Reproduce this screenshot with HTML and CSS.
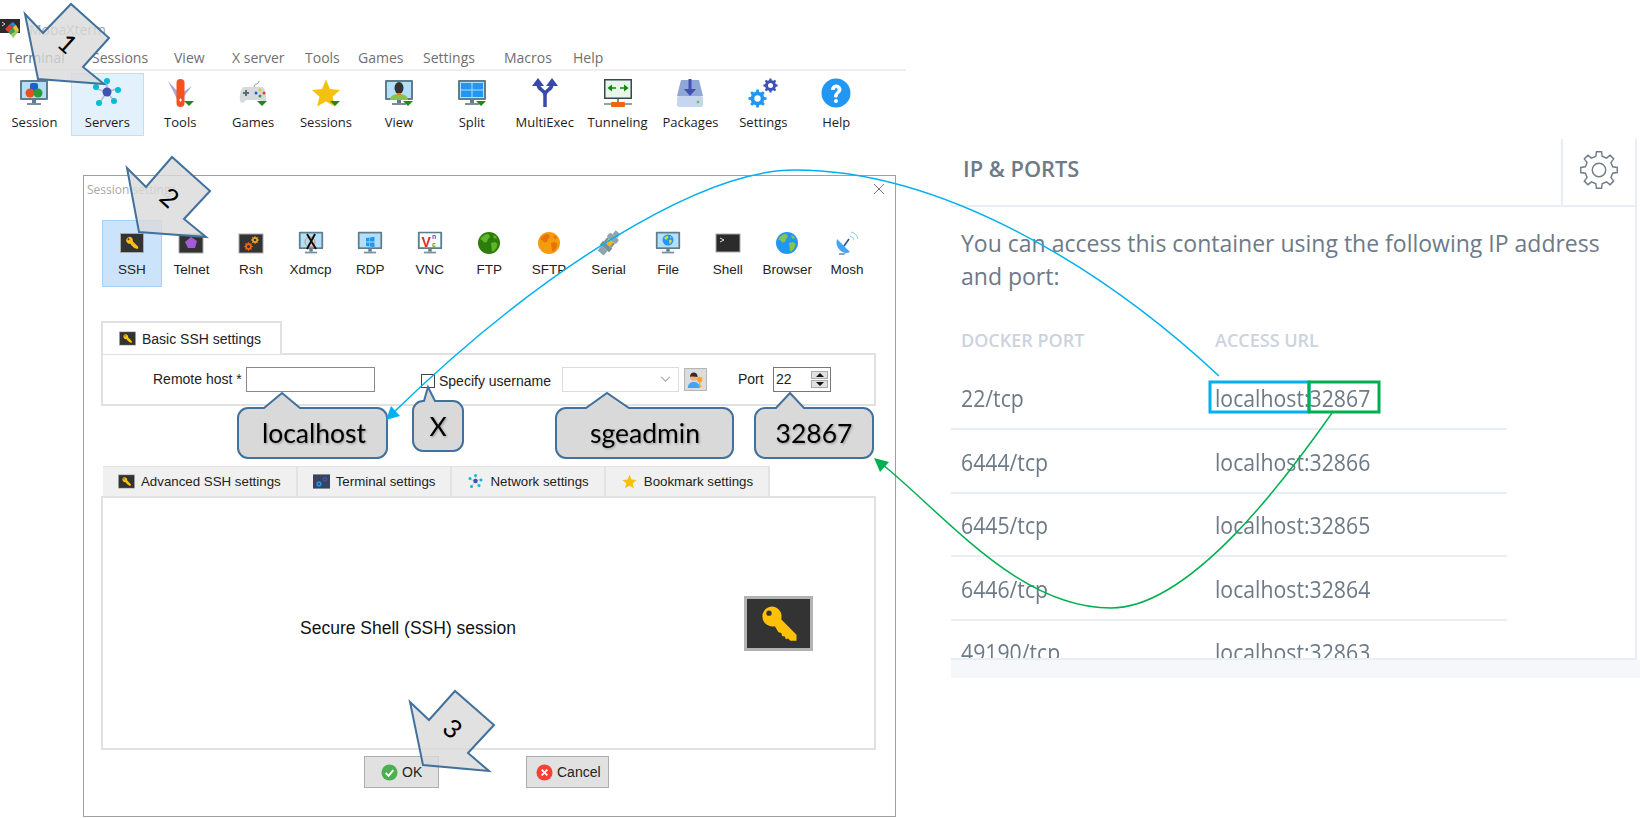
FILE: index.html
```html
<!DOCTYPE html>
<html lang="en">
<head>
<meta charset="utf-8">
<title>MobaXterm session setup</title>
<link rel="stylesheet" href="styles.css">
</head>
<body>
<svg class="defs" width="0" height="0" aria-hidden="true">
  <defs>
    <symbol id="gear" viewBox="-12 -12 24 24"><path fill-rule="evenodd" d="M11.39-1.6 11.39 1.6 8.57 1.98 7.46 4.66 9.18 6.92 6.92 9.18 4.66 7.46 1.98 8.57 1.6 11.39-1.6 11.39-1.98 8.57-4.66 7.46-6.92 9.18-9.18 6.92-7.46 4.66-8.57 1.98-11.39 1.6-11.39-1.6-8.57-1.98-7.46-4.66-9.18-6.92-6.92-9.18-4.66-7.46-1.98-8.57-1.6-11.39 1.6-11.39 1.98-8.57 4.66-7.46 6.92-9.18 9.18-6.92 7.46-4.66 8.57-1.98ZM4 0A4 4 0 1 0-4 0 4 4 0 1 0 4 0Z"/></symbol>
    <symbol id="key" viewBox="0 0 24 24"><path fill="#ffc107" d="M7.500 1.500a6 6 0 0 1 5.800 7.700l9.200 9.200V22h-3.700l-1.300-1.300-1.400.5-.6-1.700-1.600-.3-.5-1.800-1.700-.4-2.200-3.700A6 6 0 1 1 7.500 1.500z"/><circle cx="6" cy="5.500" r="1.600" fill="#333"/></symbol>
    <symbol id="keytile" viewBox="0 0 24 20"><rect x=".5" y=".5" width="23" height="19" fill="#333" stroke="#aaa"/><use href="#key" x="5" y="3" width="14" height="14"/></symbol>
    <symbol id="mon" viewBox="0 0 30 30"><rect x="1" y="2" width="28" height="20" rx="1" fill="#607d8b"/><rect x="3" y="4" width="24" height="16" fill="#b3dff9"/><rect x="13" y="22" width="4" height="3" fill="#607d8b"/><rect x="8" y="25" width="14" height="2" fill="#78909c"/></symbol>
    <symbol id="land" viewBox="0 0 24 24"><path fill="currentColor" d="M6 5l3-2 3 .5 1 2.500-2 2-1 3-3 .5-1.500-2-2-1 .5-2zM14 12l4-1 2.500 2-1 4-3 3.500-1.500-.5-.5-4zM16 4l3 1.500 1 2h-3z"/></symbol>
    <symbol id="net" viewBox="0 0 30 30"><g stroke="#b0bec5" stroke-width="1.500"><path d="M15 14 15 4M15 14 5 11M15 14 24 11M15 14 8 24M15 14 22 23"/></g><circle cx="15" cy="14" r="4.500" fill="#3f51b5"/><g fill="#00bcd4"><circle cx="15" cy="3" r="3"/><circle cx="4" cy="9" r="3"/><circle cx="26" cy="12" r="3"/><circle cx="7" cy="25" r="3"/><circle cx="22" cy="23" r="3"/></g></symbol>
    <symbol id="star" viewBox="0 0 30 30"><path fill="#f4c20d" d="M15 1.500 19 11 29 12 21.500 18.800 24 28.500 15 23.500 6 28.500 8.500 18.800 1 12 11 11z"/></symbol>
    <symbol id="tri" viewBox="0 0 30 30"><path fill="#1b8a1b" d="M19 23h10l-5 5z"/></symbol>
  </defs>
</svg>

<div class="canvas">
  <div class="left">
    <header class="titlebar">
      <svg class="app-ico" viewBox="0 0 20 20"><rect y="0" width="20" height="14" fill="#2b2b2b"/><path d="M2 3l3 2-3 2" fill="none" stroke="#ccc"/><path d="M5 10l5-5 3 3-5 5z" fill="#e53935"/><path d="M10 5l3-2 3 3-3 2z" fill="#1e88e5"/><path d="M8 13l5-5 3 3-5 5z" fill="#43a047"/><path d="M13 8l3-2 3 5-3 3z" fill="#fbc02d"/><path d="M11 16l5-5 3 1-6 7z" fill="#9ccc65"/></svg>
      <span class="app-name">MobaXterm</span>
    </header>
    <nav class="menu">
      <span>Terminal</span><span>Sessions</span><span>View</span><span>X server</span><span>Tools</span><span>Games</span><span>Settings</span><span>Macros</span><span>Help</span>
    </nav>
    <div class="toolbar">
      <div class="tool">
        <svg class="tool-ico" viewBox="0 0 30 30"><use href="#mon" width="30" height="30"/><rect x="11" y="5" width="8" height="8" rx="2" fill="#1e5fd0"/><circle cx="11" cy="15" r="4.500" fill="#e8501e"/><circle cx="19" cy="15" r="4.500" fill="#2e9b3a"/></svg>
        <span>Session</span>
      </div>
      <div class="tool tool-on">
        <svg class="tool-ico" viewBox="0 0 30 30"><use href="#net" width="30" height="30"/></svg>
        <span>Servers</span>
      </div>
      <div class="tool">
        <svg class="tool-ico" viewBox="0 0 30 30"><path d="M3 3 16 17 12 21ZM27 8 17 21 14 17Z" fill="#a9a8d8"/><rect x="11.500" y="1" width="8" height="28" rx="4" fill="#f4511e"/><path d="M14 22h3M15.500 20.500v3" stroke="#fff"/><use href="#tri" width="30" height="30" y="0"/></svg>
        <span>Tools</span>
      </div>
      <div class="tool">
        <svg class="tool-ico" viewBox="0 0 30 30"><path d="M16 9c0-4 5-2 5-6" fill="none" stroke="#78909c"/><path d="M6 9h18c3 0 5 9 4 14-1 3-4 2-6-1H8c-2 3-5 4-6 1C1 18 3 9 6 9z" fill="#d6dadd"/><path d="M5 15h6M8 12v6" stroke="#546e7a" stroke-width="2"/><circle cx="18" cy="15" r="1.500" fill="#1e5fd0"/><circle cx="22" cy="12" r="1.500" fill="#f4c20d"/><circle cx="26" cy="15" r="1.500" fill="#e53935"/><circle cx="22" cy="18" r="1.500" fill="#2e9b3a"/><use href="#tri" width="30" height="30"/></svg>
        <span>Games</span>
      </div>
      <div class="tool">
        <svg class="tool-ico" viewBox="0 0 30 30"><use href="#star" width="30" height="30"/><use href="#tri" width="30" height="30"/></svg>
        <span>Sessions</span>
      </div>
      <div class="tool">
        <svg class="tool-ico" viewBox="0 0 30 30"><use href="#mon" width="30" height="30"/><path d="M6 22c0-4 4-6 9-6s9 2 9 6z" fill="#8bc34a"/><ellipse cx="15" cy="10" rx="4.500" ry="6" fill="#333"/><rect x="13" y="15" width="4" height="2" fill="#f57c00"/><use href="#tri" width="30" height="30"/></svg>
        <span>View</span>
      </div>
      <div class="tool">
        <svg class="tool-ico" viewBox="0 0 30 30"><use href="#mon" width="30" height="30"/><path d="M4 5h10.500v6.500H4zM15.500 5H26v6.500H15.500zM4 12.500h10.500V19H4zM15.500 12.500H26V19H15.500z" fill="#2196f3"/><use href="#tri" width="30" height="30"/></svg>
        <span>Split</span>
      </div>
      <div class="tool">
        <svg class="tool-ico" viewBox="0 0 30 30"><path d="M15 29V17C15 11 8 13 8 6M15 17C15 11 22 13 22 6" fill="none" stroke="#3949ab" stroke-width="3.500"/><path d="M8 0 14 8H2zM22 0 28 8H16z" fill="#3949ab"/></svg>
        <span>MultiExec</span>
      </div>
      <div class="tool">
        <svg class="tool-ico" viewBox="0 0 30 30"><rect x="1" y="1" width="28" height="20" fill="#37474f"/><rect x="2.500" y="2.500" width="25" height="17" fill="#e8f5e9"/><path d="M8 10H13M22 10H17" stroke="#0a8a0a" stroke-width="1.500"/><path d="M9 6.500v7L4.500 10zM21 6.500v7l4.500-3.500z" fill="#0a8a0a"/><rect x="14" y="21" width="2" height="4" fill="#78909c"/><rect x="1" y="25" width="28" height="2" fill="#90a4ae"/><rect x="8" y="24" width="14" height="5" rx="1" fill="#f4630f"/></svg>
        <span>Tunneling</span>
      </div>
      <div class="tool">
        <svg class="tool-ico" viewBox="0 0 30 30"><path d="M6 2h18l4 16H2z" fill="#8fa8d6"/><rect x="2" y="18" width="26" height="11" rx="2" fill="#c5d6ee"/><circle cx="23" cy="24" r="1.300" fill="#55cc22"/><path d="M15 1v13" stroke="#3f51b5" stroke-width="3"/><path d="M9 11h12l-6 7z" fill="#3f51b5"/></svg>
        <span>Packages</span>
      </div>
      <div class="tool">
        <svg class="tool-ico" viewBox="0 0 30 30"><use class="gear-dk" href="#gear" x="15" y="0" width="15" height="15"/><use class="gear-lt" href="#gear" x="0" y="11" width="19" height="19"/></svg>
        <span>Settings</span>
      </div>
      <div class="tool">
        <svg class="tool-ico" viewBox="0 0 30 30"><circle cx="15" cy="15" r="14.500" fill="#2196f3"/><path d="M10.500 11.500c0-6 9.500-6 9.500 0 0 4-4 3.500-4 7.500h-2.500c0-5 3.500-4.500 3.500-7.500 0-2.500-3.500-2.500-3.500 0z" fill="#fff" stroke="#fff"/><circle cx="15" cy="23" r="2" fill="#fff"/></svg>
        <span>Help</span>
      </div>
    </div>

    <section class="dialog">
      <div class="dlg-title">
        <span>Session settings</span>
        <svg class="dlg-close" viewBox="0 0 12 12"><path d="M1 1 11 11M11 1 1 11" stroke="#777" fill="none"/></svg>
      </div>
      <div class="types">
        <div class="type type-on"><svg class="type-ico" viewBox="0 0 24 24"><use href="#keytile" y="2" width="24" height="20"/></svg><span>SSH</span></div>
        <div class="type"><svg class="type-ico" viewBox="0 0 24 24"><rect y="3" width="24" height="19" fill="#333" stroke="#aaa"/><path d="M12 6l6 4-2 7H9l-3-6z" fill="#a35bd6"/></svg><span>Telnet</span></div>
        <div class="type"><svg class="type-ico" viewBox="0 0 24 24"><rect y="3" width="24" height="19" fill="#333" stroke="#aaa"/><use class="gear-or" href="#gear" x="5" y="11" width="9" height="9"/><use class="gear-yl" href="#gear" x="12" y="5" width="8" height="8"/></svg><span>Rsh</span></div>
        <div class="type"><svg class="type-ico" viewBox="0 0 24 24"><use href="#mon" x="-1" y="-1" width="26" height="26"/><circle cx="11" cy="11" r="5" fill="none" stroke="#e08a5a"/><path d="M8 3 17 18M16 3 8 18" stroke="#111" stroke-width="2"/></svg><span>Xdmcp</span></div>
        <div class="type"><svg class="type-ico" viewBox="0 0 24 24"><use href="#mon" x="-1" y="-1" width="26" height="26"/><path d="M8 7l3.500-.5v4H8zM12 6.500l4.500-.7v4.700H12zM8 11.500h3.500v4L8 15zM12 11.500h4.500v4.700L12 15.500z" fill="#2196f3"/></svg><span>RDP</span></div>
        <div class="type"><svg class="type-ico" viewBox="0 0 24 24"><use href="#mon" x="-1" y="-1" width="26" height="26"/><rect x="2" y="2.500" width="20" height="13.500" fill="#fff"/><text class="vnc"><tspan class="vnc-v" x="3.500" y="15.500">V</tspan><tspan class="vnc-n" x="14" y="8">n</tspan><tspan class="vnc-c" x="14" y="15.800">c</tspan></text></svg><span>VNC</span></div>
        <div class="type"><svg class="type-ico" viewBox="0 0 24 24"><circle cx="12" cy="12" r="11" fill="#2e7d0a"/><use href="#land" width="24" height="24" color="#5cb82a"/></svg><span>FTP</span></div>
        <div class="type"><svg class="type-ico" viewBox="0 0 24 24"><circle cx="12" cy="12" r="11" fill="#f59c0c"/><use href="#land" width="24" height="24" color="#e8730c"/></svg><span>SFTP</span></div>
        <div class="type"><svg class="type-ico" viewBox="0 0 24 24"><g transform="rotate(40 12 12)"><rect x="9" y="-2" width="6" height="5" fill="#90a4ae"/><rect x="6" y="3" width="12" height="6" rx="2" fill="#90a4ae"/><rect x="8" y="9" width="8" height="5" fill="#f5b50a"/><path d="M8 9v5M16 9v5" stroke="#78909c" stroke-width="2"/><rect x="6" y="14" width="12" height="5" fill="#78909c"/><rect x="8" y="19" width="8" height="6" fill="#90a4ae"/></g></svg><span>Serial</span></div>
        <div class="type"><svg class="type-ico" viewBox="0 0 24 24"><use href="#mon" x="-1" y="-1" width="26" height="26"/><circle cx="12" cy="9" r="5.500" fill="#2196f3"/><use href="#land" x="6.500" y="3.500" width="11" height="11" color="#cddc39"/></svg><span>File</span></div>
        <div class="type"><svg class="type-ico" viewBox="0 0 24 24"><rect y="3" width="24" height="18" fill="#2b2b2b" stroke="#aaa"/><path d="M4 7l4 2-4 2" fill="none" stroke="#ddd"/></svg><span>Shell</span></div>
        <div class="type"><svg class="type-ico" viewBox="0 0 24 24"><circle cx="12" cy="12" r="11" fill="#2196f3"/><use href="#land" width="24" height="24" color="#8bc34a"/></svg><span>Browser</span></div>
        <div class="type"><svg class="type-ico" viewBox="0 0 24 24"><path d="M2 8 15 21C9 25-1 17 2 8z" fill="#42a5f5"/><path d="M9 15 14 8" stroke="#1a4f8a" stroke-width="1.500"/><path d="M15 5a5 5 0 0 1 4 4M16 1a9 9 0 0 1 7 7" fill="none" stroke="#90caf9"/><path d="M4 22h7l-2 2H4z" fill="#90a4ae"/></svg><span>Mosh</span></div>
      </div>

      <div class="basic-tabs">
        <div class="tab-on"><svg class="tab-ico" viewBox="0 0 24 20"><use href="#keytile" width="24" height="20"/></svg><span>Basic SSH settings</span></div>
      </div>
      <div class="basic-panel">
        <label class="host-label">Remote host *</label>
        <span class="field host-field"></span>
        <span class="check"></span>
        <label class="user-label">Specify username</label>
        <span class="combo"><svg class="chev" viewBox="0 0 12 8"><path d="M1 1l5 5 5-5" fill="none" stroke="#aaa" stroke-width="1.300"/></svg></span>
        <span class="user-btn"><svg viewBox="0 0 20 20"><path d="M1 20c0-5 3-7 7-7s7 2 7 7z" fill="#42a5f5"/><circle cx="8" cy="7" r="4.500" fill="#f0b27a"/><path d="M3.500 7c0-7 9-7 9 0-3 0-6-1-9 0z" fill="#3b2a20"/><circle cx="15" cy="10" r="3.200" fill="#f5a623"/><path d="M15 12v6h2" fill="none" stroke="#f5a623" stroke-width="1.600"/></svg></span>
        <label class="port-label">Port</label>
        <span class="spin"><span class="spin-val">22</span><span class="spin-btns"><i class="spin-up"></i><i class="spin-dn"></i></span></span>
      </div>

      <div class="sub-tabs">
        <div class="sub-tab"><svg class="tab-ico" viewBox="0 0 24 20"><use href="#keytile" width="24" height="20"/></svg><span>Advanced SSH settings</span></div>
        <div class="sub-tab"><svg class="tab-ico" viewBox="0 0 24 20"><rect width="24" height="20" fill="#37445c"/><use class="gear-lt" href="#gear" x="4" y="9" width="9" height="9"/><use class="gear-dk" href="#gear" x="13" y="3" width="8" height="8"/></svg><span>Terminal settings</span></div>
        <div class="sub-tab"><svg class="tab-ico" viewBox="0 0 30 30"><use href="#net" width="30" height="30"/></svg><span>Network settings</span></div>
        <div class="sub-tab"><svg class="tab-ico" viewBox="0 0 30 30"><use href="#star" width="30" height="30"/></svg><span>Bookmark settings</span></div>
      </div>
      <div class="sub-panel">
        <p class="session-desc">Secure Shell (SSH) session</p>
        <div class="big-key"><svg viewBox="0 0 24 24"><use href="#key" width="24" height="24"/></svg></div>
      </div>
      <div class="actions">
        <button class="btn btn-ok" type="button"><svg viewBox="0 0 18 18"><circle cx="9" cy="9" r="8.500" fill="#4caf50"/><path d="M5 9.500l3 3 5-6" fill="none" stroke="#fff" stroke-width="2"/></svg>OK</button>
        <button class="btn btn-cancel" type="button"><svg viewBox="0 0 18 18"><circle cx="9" cy="9" r="8.500" fill="#f44336"/><path d="M6 6l6 6M12 6l-6 6" fill="none" stroke="#fff" stroke-width="2"/></svg>Cancel</button>
      </div>
    </section>
  </div>

  <main class="ports">
    <div class="card">
      <div class="card-head">
        <h2>IP &amp; PORTS</h2>
        <div class="gear-cell"><svg viewBox="-12.500 -12.500 25 25"><path fill="none" stroke="#6f7c89" stroke-width=".9" d="M11.390-1.600 11.390 1.600 8.570 1.980 7.460 4.660 9.180 6.920 6.920 9.180 4.660 7.460 1.980 8.570 1.600 11.390-1.600 11.390-1.980 8.570-4.660 7.460-6.920 9.180-9.180 6.920-7.460 4.660-8.570 1.980-11.390 1.600-11.390-1.600-8.570-1.980-7.460-4.660-9.180-6.920-6.920-9.180-4.660-7.460-1.980-8.570-1.600-11.390 1.600-11.390 1.980-8.570 4.660-7.460 6.920-9.180 9.180-6.920 7.460-4.660 8.570-1.980Z"/><circle r="4.200" fill="none" stroke="#6f7c89" stroke-width=".9"/></svg></div>
      </div>
      <div class="card-body">
        <p class="intro">You can access this container using the following IP address and port:</p>
        <div class="port-head"><span>DOCKER PORT</span><span>ACCESS URL</span></div>
        <div class="port-rows">
          <div class="port-row"><span>22/tcp</span><span>localhost:32867</span></div>
          <div class="port-row"><span>6444/tcp</span><span>localhost:32866</span></div>
          <div class="port-row"><span>6445/tcp</span><span>localhost:32865</span></div>
          <div class="port-row"><span>6446/tcp</span><span>localhost:32864</span></div>
          <div class="port-row"><span>49190/tcp</span><span>localhost:32863</span></div>
        </div>
      </div>
    </div>
    <div class="card-foot"></div>
  </main>

  <svg class="overlay" viewBox="0 0 1640 818">
    <g class="step">
      <path d="M25 14 43 33 71 4 109 38 83 67 104 84 38 79Z"/>
      <path d="M127 168 146 187 172 157 210 191 184 219 206 237 139 232Z"/>
      <path d="M410 702 429 720 455 691 494 725 468 753 489 771 423 765Z"/>
    </g>
    <text class="digit" transform="translate(68 43) rotate(42)">1</text>
    <text class="digit" transform="translate(170 197) rotate(42)">2</text>
    <text class="digit" transform="translate(453 728) rotate(42)">3</text>

    <g class="callout">
      <path d="M248 408H264L282 393 300 408H377a10 10 0 0 1 10 10V448a10 10 0 0 1-10 10H248a10 10 0 0 1-10-10V418a10 10 0 0 1 10-10Z"/>
      <path d="M423 401H424L428 387 435 401H453a10 10 0 0 1 10 10V441a10 10 0 0 1-10 10H423a10 10 0 0 1-10-10V411a10 10 0 0 1 10-10Z"/>
      <path d="M566 408H586L607 393 629 408H723a10 10 0 0 1 10 10V448a10 10 0 0 1-10 10H566a10 10 0 0 1-10-10V418a10 10 0 0 1 10-10Z"/>
      <path d="M765 408H776L790 393 804 408H863a10 10 0 0 1 10 10V448a10 10 0 0 1-10 10H765a10 10 0 0 1-10-10V418a10 10 0 0 1 10-10Z"/>
    </g>
    <text class="call-text" x="314" y="443">localhost</text>
    <text class="call-text" x="438" y="436">X</text>
    <text class="call-text" x="645" y="443">sgeadmin</text>
    <text class="call-text" x="814" y="443">32867</text>

    <rect class="hl-blue" x="1210" y="382" width="99" height="30"/>
    <rect class="hl-green" x="1309" y="382" width="70" height="30"/>
    <path class="link-blue" d="M1219 376C1100 265 940 170 795 170 700 170 540 270 393 413"/>
    <path class="head-blue" d="M386 420 391 406 400 416Z"/>
    <path class="link-green" d="M1332 413C1285 480 1190 608 1111 608 1020 608 950 520 882 464"/>
    <path class="head-green" d="M874 458 889 462 880 472Z"/>
  </svg>
</div>
</body>
</html>
```
FILE: styles.css
```css
* { box-sizing: border-box; }
html, body { margin: 0; padding: 0; background: #fff; }
.defs { position: absolute; }
.canvas {
  position: relative;
  display: flex;
  width: 1640px;
  height: 818px;
  overflow: hidden;
  font-family: "Liberation Sans", Arial, sans-serif;
  color: #222;
}

/* Left column: MobaXterm */
.left { width: 951px; flex: none; }
.titlebar { display: flex; align-items: flex-start; height: 46px; padding-top: 19px; }
.app-ico { width: 20px; height: 20px; margin-right: 9px; }
.app-name { font: 14px/22px "Open Sans", sans-serif; color: #a3a3a3; }
.menu {
  display: grid;
  grid-template-columns: 85px 82px 58px 73px 53px 65px 81px 69px auto;
  width: 906px;
  height: 25px;
  padding-left: 7px;
  align-items: center;
  border-bottom: 2px solid #eee;
  font: 14px "Open Sans", sans-serif;
  color: #6f6f6f;
}
.toolbar {
  display: grid;
  grid-template-columns: repeat(12, 72.9px);
  margin: 2px 0 0 -2px;
  height: 64px;
}
.tool {
  display: flex;
  flex-direction: column;
  align-items: center;
  height: 63px;
  padding-top: 4px;
  border: 1px solid transparent;
  font: 13px "Open Sans", sans-serif;
  color: #1c1c1c;
}
.tool span { line-height: 18px; margin-top: 5px; }
.tool-on { background: #e3f1fd; border-color: #bfe0fb; }
.tool-ico { width: 30px; height: 30px; flex: none; }
.gear-dk { fill: #3f51b5; }
.gear-lt { fill: #2196f3; }
.gear-or { fill: #f4630f; }
.gear-yl { fill: #f5a623; }

/* Dialog */
.dialog {
  width: 813px;
  height: 642px;
  margin: 38px 0 0 83px;
  padding: 0 0 0 17px;
  border: 1px solid #a0a0a0;
}
.dlg-title {
  display: flex;
  justify-content: space-between;
  align-items: center;
  height: 26px;
  margin-left: -14px;
  padding-right: 10px;
  font: 12px "Open Sans", sans-serif;
  color: #a8a8a8;
}
.dlg-close { width: 12px; height: 12px; }
.types {
  display: grid;
  grid-template-columns: repeat(13, 59.6px);
  margin: 18px 0 0 1px;
  height: 67px;
}
.type {
  display: flex;
  flex-direction: column;
  align-items: center;
  padding-top: 10px;
  font-size: 13.5px;
  border: 1px solid transparent;
}
.type span { line-height: 18px; margin-top: 6px; }
.type-on { background: #cce4fb; border-color: #a5d3f8; }
.type-ico { width: 24px; height: 24px; flex: none; overflow: visible; }
.vnc { font: bold 6.800px "Liberation Sans", sans-serif; }
.vnc-v { font-size: 14px; fill: #d32f2f; }
.vnc-n { fill: #1e5fd0; }
.vnc-c { fill: #2e9b3a; }

.basic-tabs { display: flex; margin-top: 34px; }
.tab-on {
  display: flex;
  align-items: center;
  gap: 6px;
  width: 181px;
  height: 33px;
  padding-left: 16px;
  border: 2px solid #e1e1e1;
  border-bottom: 0;
  font-size: 14px;
  position: relative;
  z-index: 1;
  background: #fff;
}
.tab-ico { width: 17px; height: 15px; flex: none; }
.basic-panel {
  display: flex;
  align-items: center;
  width: 775px;
  height: 53px;
  margin-top: -1px;
  padding-bottom: 1px;
  border: 2px solid #e1e1e1;
  font-size: 14px;
}
.host-label { width: 88px; margin-left: 50px; white-space: nowrap; }
.field { width: 129px; height: 25px; margin-left: 5px; border: 1px solid #8a8a8a; background: #fff; }
.check { width: 14px; height: 14px; margin: 4px 0 0 46px; border: 1px solid #444; }
.user-label { width: 110px; margin: 4px 0 0 4px; white-space: nowrap; }
.combo {
  display: flex;
  align-items: center;
  justify-content: flex-end;
  width: 117px;
  height: 25px;
  margin-left: 13px;
  padding-right: 7px;
  border: 1px solid #dcdcdc;
}
.chev { width: 11px; height: 7px; }
.user-btn { width: 23px; height: 23px; margin-left: 5px; padding: 2px; background: #dcdcdc; border: 1px solid #b5b5b5; }
.user-btn svg { display: block; width: 17px; height: 17px; }
.port-label { width: 25px; margin-left: 31px; }
.spin {
  display: flex;
  align-items: center;
  justify-content: space-between;
  width: 58px;
  height: 25px;
  margin-left: 10px;
  padding: 0 2px 0 2px;
  border: 1px solid #777;
}
.spin-val { font-size: 14px; }
.spin-btns { display: flex; flex-direction: column; gap: 1px; }
.spin-btns i { display: block; position: relative; width: 17px; height: 8px; background: #e1e1e1; border: 1px solid #aaa; }
.spin-up::after, .spin-dn::after {
  content: "";
  position: absolute;
  left: 4px;
  border-left: 4px solid transparent;
  border-right: 4px solid transparent;
}
.spin-up::after { top: 1px; border-bottom: 4px solid #111; }
.spin-dn::after { top: 1px; border-top: 4px solid #111; }

.sub-tabs { display: flex; margin: 60px 0 0 2px; }
.sub-tab {
  display: flex;
  align-items: center;
  gap: 6px;
  height: 31px;
  padding: 0 15px;
  background: #f0f0f0;
  border: 1px solid #e3e3e3;
  border-left-width: 0;
  border-right-width: 2px;
  font-size: 13.300px;
  white-space: nowrap;
}
.sub-panel {
  display: flex;
  width: 775px;
  height: 254px;
  margin-top: -1px;
  padding: 98px 0 0 197px;
  border: 2px solid #e1e1e1;
}
.session-desc { width: 444px; margin: 22px 0 0; font-size: 17.500px; line-height: 20px; color: #111; }
.big-key {
  display: flex;
  align-items: center;
  justify-content: center;
  width: 69px;
  height: 55px;
  background: #333;
  border: 3px solid #b3b3b3;
}
.big-key svg { width: 40px; height: 40px; }
.actions { display: flex; margin: 6px 0 0 263px; }
.btn {
  display: flex;
  align-items: center;
  height: 32px;
  padding: 0;
  background: #e1e1e1;
  border: 1px solid #adadad;
  font: 14px "Liberation Sans", sans-serif;
  color: #222;
}
.btn svg { width: 17px; height: 17px; margin-right: 4px; }
.btn-ok { width: 75px; padding-left: 16px; }
.btn-cancel { width: 83px; margin-left: 87px; padding-left: 9px; }

/* Right: Ports card */
.ports { flex: 1; padding-top: 139px; font-family: "Open Sans", sans-serif; color: #6d7a87; }
.card { width: 686px; height: 521px; background: #fff; border-right: 2px solid #e8eef5; border-bottom: 2px solid #e8eef5; overflow: hidden; }
.card-head { display: flex; justify-content: space-between; height: 68px; border-bottom: 2px solid #e8eef5; }
.card-head h2 { margin: 10px 0 0 12px; font-size: 21.800px; line-height: 40px; font-weight: 600; color: #6d7a87; }
.gear-cell { display: flex; align-items: center; justify-content: center; width: 74px; border-left: 2px solid #e8eef5; padding-bottom: 4px; }
.gear-cell svg { width: 40px; height: 40px; }
.intro { width: 670px; margin: 20px 0 0 10px; font-size: 23px; line-height: 33.400px; }
.port-head { display: grid; grid-template-columns: 254px 1fr; width: 556px; margin: 35px 0 0 10px; font-size: 18px; line-height: 22px; font-weight: 600; color: #cbd3de; }
.port-rows { width: 556px; margin-top: 16px; }
.port-row { display: grid; grid-template-columns: 254px 1fr; align-items: center; height: 63.500px; padding-left: 10px; font-size: 24px; border-bottom: 2px solid #e8eef5; }
.port-row span { display: inline-block; width: max-content; transform: scaleX(.885); transform-origin: left center; }
.card-foot { height: 18px; background: #f5f7fb; }

/* Annotation overlay */
.overlay { position: absolute; left: 0; top: 0; width: 1640px; height: 818px; pointer-events: none; }
.step path { fill: #d9d9d9; fill-opacity: .8; stroke: #41719c; stroke-width: 2; }
.callout path { fill: #d9d9d9; stroke: #41719c; stroke-width: 2; }
.digit { font: 26px "Lato", sans-serif; fill: #000; text-anchor: middle; dominant-baseline: central; }
.call-text { font: 26.500px "Lato", sans-serif; fill: #000; text-anchor: middle; filter: drop-shadow(1px 1px 1px rgba(0,0,0,.3)); }
.hl-blue { fill: none; stroke: #00b0f0; stroke-width: 3; }
.hl-green { fill: none; stroke: #00b050; stroke-width: 3; }
.link-blue { fill: none; stroke: #00b0f0; stroke-width: 1.500; }
.link-green { fill: none; stroke: #00b050; stroke-width: 1.500; }
.head-blue { fill: #00b0f0; }
.head-green { fill: #00b050; }
```
